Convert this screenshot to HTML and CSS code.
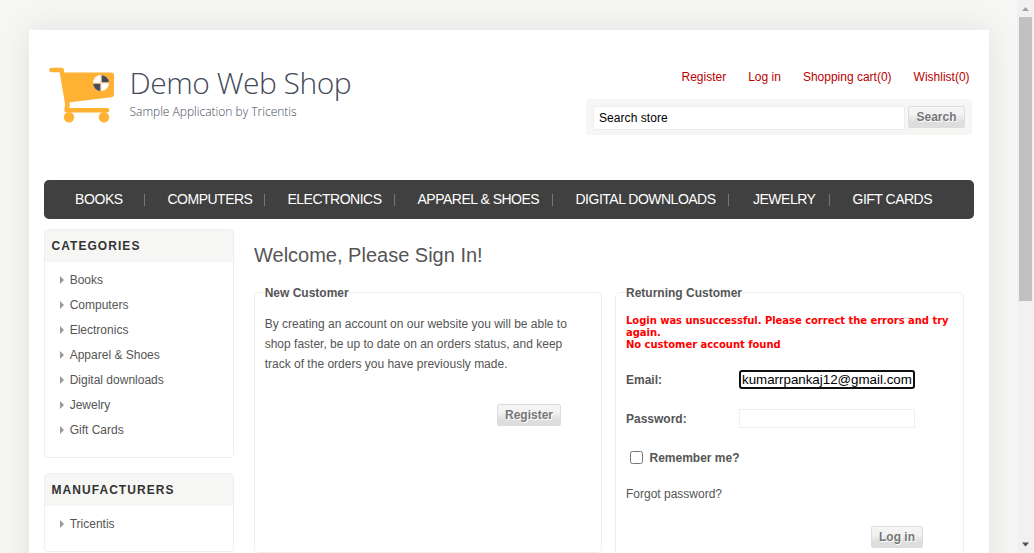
FILE: index.html
```html
<!DOCTYPE html>
<html lang="en">
<head>
<meta charset="utf-8">
<title>Demo Web Shop. Login</title>
<link rel="stylesheet" href="styles.css">
</head>
<body>
<div class="viewport">
  <div class="backdrop">
    <div class="sheet">
      <header class="header">
        <a class="logo">
          <svg class="cart" width="66" height="57" viewBox="0 0 66 57">
            <path d="M2.500 3H12.600L18.500 37.500 17.500 43.200H58" fill="none" stroke="#ffb133" stroke-width="4.600" stroke-linecap="round" stroke-linejoin="round"/>
            <path d="M14 5.600H62Q65 5.600 65 8.600V27.500Q65 30 62.500 30.300L19 35.500Z" fill="#ffb133"/>
            <circle cx="20" cy="50.300" r="5.200" fill="#ffb133"/>
            <circle cx="55" cy="50.300" r="5.200" fill="#ffb133"/>
            <circle cx="52" cy="16" r="8" fill="#fff"/>
            <path d="M52.400 15.600V8A8 8 0 0 1 60 15.600ZM51.600 16.400V24A8 8 0 0 1 44 16.400Z" fill="#484c59"/>
            <path d="M52 8V24M44 16H60" stroke="#ffd08a" stroke-width=".8"/>
          </svg>
          <span class="brand">
            <span class="brand-name">Demo Web Shop</span>
            <span class="brand-tag">Sample Application by Tricentis</span>
          </span>
        </a>
        <div class="tools">
          <nav class="account">
            <a>Register</a><a>Log in</a><a>Shopping cart(0)</a><a>Wishlist(0)</a>
          </nav>
          <form class="search">
            <input class="search-input" type="text" value="Search store">
            <button class="button search-button" type="button">Search</button>
          </form>
        </div>
      </header>
      <ul class="menu">
        <li>BOOKS</li><li>COMPUTERS</li><li>ELECTRONICS</li><li>APPAREL &amp; SHOES</li><li>DIGITAL DOWNLOADS</li><li>JEWELRY</li><li>GIFT CARDS</li>
      </ul>
      <div class="columns">
        <aside class="sidebar">
          <section class="block">
            <h3>CATEGORIES</h3>
            <ul>
              <li>Books</li><li>Computers</li><li>Electronics</li><li>Apparel &amp; Shoes</li><li>Digital downloads</li><li>Jewelry</li><li>Gift Cards</li>
            </ul>
          </section>
          <section class="block">
            <h3>MANUFACTURERS</h3>
            <ul><li>Tricentis</li></ul>
          </section>
        </aside>
        <main class="content">
          <h1>Welcome, Please Sign In!</h1>
          <div class="panels">
            <fieldset class="panel new-customer">
              <legend>New Customer</legend>
              <p>By creating an account on our website you will be able to<br>shop faster, be up to date on an orders status, and keep<br>track of the orders you have previously made.</p>
              <button class="button register-button" type="button">Register</button>
            </fieldset>
            <fieldset class="panel returning">
              <legend>Returning Customer</legend>
              <div class="errors">Login was unsuccessful. Please correct the errors and try<br>again.<br>No customer account found</div>
              <label class="row"><span>Email:</span><input class="field focused" type="text" value="kumarrpankaj12@gmail.com"></label>
              <label class="row"><span>Password:</span><input class="field" type="password"></label>
              <label class="remember"><input type="checkbox"><span>Remember me?</span></label>
              <a class="forgot">Forgot password?</a>
              <button class="button login-button" type="button">Log in</button>
            </fieldset>
          </div>
        </main>
      </div>
    </div>
  </div>
  <div class="scrollbar">
    <svg width="17" height="17" viewBox="0 0 17 17"><path d="M5 11L8.500 7 12 11Z" fill="#a3a3a3"/></svg>
    <div class="thumb"></div>
    <svg class="down" width="17" height="17" viewBox="0 0 17 17"><path d="M5 6.500H12L8.500 10.500Z" fill="#505050"/></svg>
  </div>
</div>
</body>
</html>
```
FILE: styles.css
```css
* { box-sizing: border-box; margin: 0; padding: 0; }
body { font: 12px "Liberation Sans", Arial, sans-serif; color: #555; overflow: hidden; }
ul { list-style: none; }
input, button { font-family: inherit; }
.viewport { display: flex; width: 1034px; height: 553px; overflow: hidden; }
.backdrop { flex: 1; padding: 30px 28px 0 29px; background: #f6f6f4; overflow: hidden; }
.sheet { width: 960px; height: 900px; padding: 0 15px; background: #fff; box-shadow: 0 0 30px rgba(0, 0, 0, .09); }

.header { display: flex; justify-content: space-between; height: 150px; padding-right: 2px; }
.logo { display: flex; padding: 37px 0 0 5px; }
.brand { display: flex; flex-direction: column; padding-left: 14.500px; font-family: "Open Sans", sans-serif; font-weight: 300; color: #444a59; white-space: nowrap; }
.brand-name { font-size: 30px; line-height: 32px; letter-spacing: -.480px; }
.brand-tag { font-size: 12px; line-height: 18px; margin-top: 4px; }
.tools { width: 386px; padding-top: 38px; }
.account { display: flex; justify-content: flex-end; gap: 22px; padding-right: 2.400px; line-height: 18px; color: #b00; }
.search { display: flex; gap: 3px; height: 36px; margin-top: 13px; padding: 7px; background: #f6f6f4; border-radius: 3px; }
.search-input { width: 312px; height: 24px; padding: 0 5px; border: 1px solid #eee; font-size: 12px; letter-spacing: .060px; color: #000; }
.button { height: 22px; border: 1px solid #ddd; border-radius: 2px; background: linear-gradient(#f5f5f5 0, #f1f1f1 40%, #dfdfdf 70%, #ddd 100%); font-size: 12px; font-weight: bold; line-height: 19px; color: #777; text-shadow: 1px 1px 0 #fff; text-align: center; }
.search-button { width: 57px; }

.menu { display: flex; align-items: center; height: 39px; padding-left: 8px; background: #404040; border-radius: 5px; font-size: 14px; letter-spacing: -.500px; color: #fff; white-space: nowrap; }
.menu li { height: 12px; padding-left: 22.500px; border-right: 1px solid #777; line-height: 11px; }
.menu li:nth-child(1) { width: 93px; padding-left: 23px; letter-spacing: -.400px; }
.menu li:nth-child(2) { width: 120px; }
.menu li:nth-child(3) { width: 130px; }
.menu li:nth-child(4) { width: 158px; }
.menu li:nth-child(5) { width: 176px; }
.menu li:nth-child(6) { width: 101px; padding-left: 24px; }
.menu li:nth-child(7) { border: 0; }

.columns { display: flex; gap: 20px; padding-top: 10px; }
.sidebar { display: flex; flex-direction: column; gap: 15px; width: 190px; }
.block { border: 1px solid #eee; border-radius: 4px; overflow: hidden; }
.block h3 { height: 32px; padding-left: 6.500px; background: #f6f6f4; font-size: 12px; line-height: 32px; letter-spacing: 1.050px; color: #333; }
.block ul { padding: 5px 15px 15px; }
.block li { display: flex; align-items: center; gap: 5.700px; height: 25px; }
.block li::before { content: ""; border-left: 4px solid #999; border-top: 4px solid transparent; border-bottom: 4px solid transparent; }

.content { padding-top: 11px; }
h1 { font-size: 20px; font-weight: normal; line-height: 30px; }
.panels { display: flex; align-items: flex-start; gap: 13px; margin-top: 15px; }
.panel { min-width: 0; border: 1px solid #eee; border-radius: 5px; padding: 0 9.700px; }
legend { padding-top: 2px; font-weight: bold; line-height: 13px; }
.new-customer { width: 348px; height: 268px; }
.new-customer p { padding-top: 14px; line-height: 20px; white-space: nowrap; }
.register-button { display: block; width: 64px; margin: 30px 0 0 232.300px; }
.returning { width: 349px; height: 400px; padding-left: 10px; }
.errors { padding-top: 15px; font: bold 10px/12px "DejaVu Sans", Verdana, sans-serif; letter-spacing: -.040px; color: #f00; white-space: nowrap; }
.row { display: flex; align-items: center; height: 19px; margin-top: 20px; font-weight: bold; }
.errors + .row { margin-top: 19px; }
.row span { width: 113px; }
.field { width: 176px; height: 19px; padding: 0 2px; border: 1px solid #eee; font-size: 13.333px; color: #000; }
.focused { border: 2px solid #101010; border-radius: 3px; padding: 0 1px; outline: 0; }
.remember { display: flex; align-items: center; height: 20px; margin-top: 19px; padding-left: 4px; gap: 6.500px; font-weight: bold; }
.remember input { width: 13px; height: 13px; }
.remember span { padding-top: 1px; }
.forgot { display: block; margin-top: 19px; line-height: 16px; }
.login-button { display: block; width: 52px; margin: 24px 0 0 245px; }

.scrollbar { display: flex; flex-direction: column; width: 17px; background: #f1f1f1; }
.thumb { width: 13px; height: 284px; margin-left: 2px; background: #c1c1c1; }
.down { margin-top: auto; }
```
